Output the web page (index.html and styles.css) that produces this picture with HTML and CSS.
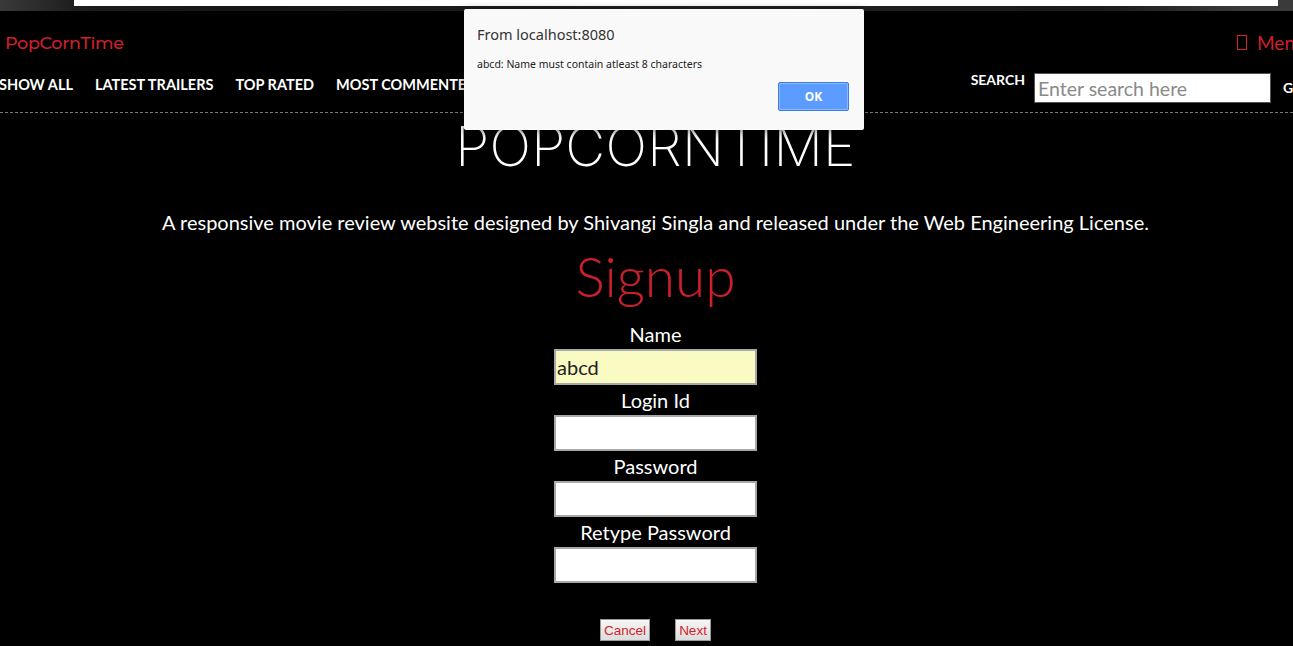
FILE: index.html
```html
<!DOCTYPE html>
<html>
<head>
<meta charset="utf-8">
<title>PopCornTime - Signup</title>
<link rel="stylesheet" href="styles.css">
</head>
<body>
<div class="topstrip"><div class="topbar"></div></div>
<header class="header">
  <div class="brand">PopCornTime</div>
  <div class="menu"><span class="menu-icon"></span>Menu</div>
</header>
<nav class="nav">
  <ul class="nav-list">
    <li>Show All</li>
    <li>Latest Trailers</li>
    <li>Top Rated</li>
    <li>Most Commented</li>
  </ul>
  <div class="search">
    <span class="search-label">Search</span>
    <input class="search-input" type="text" placeholder="Enter search here">
    <span class="search-go">GO</span>
  </div>
</nav>
<main class="main">
  <h1 class="title">POPCORNTIME</h1>
  <p class="subtitle">A responsive movie review website designed by Shivangi Singla and released under the Web Engineering License.</p>
  <h2 class="signup">Signup</h2>
  <form class="form">
    <label class="label">Name</label>
    <input class="field field-filled" type="text" value="abcd">
    <label class="label">Login Id</label>
    <input class="field" type="text">
    <label class="label">Password</label>
    <input class="field" type="password">
    <label class="label">Retype Password</label>
    <input class="field" type="password">
    <div class="buttons">
      <button type="button" class="btn">Cancel</button>
      <button type="button" class="btn">Next</button>
    </div>
  </form>
</main>
<div class="dialog">
  <div class="dialog-title">From localhost:8080</div>
  <div class="dialog-msg">abcd: Name must contain atleast 8 characters</div>
  <div class="dialog-actions"><button type="button" class="dialog-ok">OK</button></div>
</div>
</body>
</html>
```
FILE: styles.css
```css
html, body {
  margin: 0;
  padding: 0;
  background: #000;
  overflow: hidden;
  font-family: "Lato", "Noto Sans", sans-serif;
  color: #fff;
}
.topstrip {
  height: 11px;
  background: linear-gradient(90deg, #3a3a3a 0px, #1c1c1c 80px, #151515 260px, #222 700px, #1a1a1a 1100px, #3a3a3a 1240px);
  padding-left: 74px;
  padding-right: 15px;
}
.topbar {
  height: 6px;
  background: #fff;
}
.header {
  display: flex;
  justify-content: space-between;
  align-items: center;
  height: 62px;
  margin-right: -40px;
}
.brand {
  color: #d11f2c;
  font-family: "Montserrat", "Inter", sans-serif;
  font-weight: 500;
  font-size: 17.5px;
  padding-left: 5px;
  letter-spacing: -0.3px;
}
.menu {
  color: #d11f2c;
  font-size: 19px;
  display: flex;
  align-items: center;
  gap: 10px;
  width: 96px;
}
.menu-icon {
  display: inline-block;
  width: 8px;
  height: 13px;
  border: 1px solid #d11f2c;
}
.nav {
  display: flex;
  justify-content: space-between;
  align-items: flex-start;
  height: 39px;
  border-bottom: 1px dashed #777;
  margin-right: -30px;
}
.nav-list {
  display: flex;
  gap: 22px;
  list-style: none;
  margin: 2px 0 0 -1px;
  padding: 0;
}
.nav-list li {
  text-transform: uppercase;
  font-weight: 700;
  font-size: 14.5px;
  line-height: 20px;
  letter-spacing: 0;
}
.search {
  display: flex;
  align-items: flex-start;
  gap: 9px;
}
.search-label {
  text-transform: uppercase;
  font-weight: 700;
  font-size: 14px;
  line-height: 14px;
}
.search-input {
  width: 237px;
  height: 30px;
  box-sizing: border-box;
  border: 1px solid #555;
  padding: 0 3px;
  font-family: "Lato", sans-serif;
  font-size: 19.5px;
  color: #333;
  margin: 0 3px 0 0;
}
.search-input::placeholder {
  color: #8a8a8a;
}
.search-go {
  font-weight: 700;
  font-size: 14px;
  line-height: 14px;
  margin-top: 8px;
  width: 40px;
}
.main {
  display: flex;
  flex-direction: column;
  align-items: center;
  margin-right: -18px;
}
.title {
  margin: 3px 0 0;
  font-weight: 200;
  font-family: "Inter", "Lato", sans-serif;
  font-size: 55px;
  line-height: 60px;
  letter-spacing: 0.3px;
}
.subtitle {
  margin: 34px 0 0;
  font-size: 20px;
  line-height: 24px;
}
.signup {
  margin: 11px 0 0;
  color: #cb1f2d;
  font-weight: 300;
  font-size: 55px;
  line-height: 62px;
}
.form {
  display: flex;
  flex-direction: column;
  align-items: center;
  margin-top: 12px;
}
.label {
  font-size: 20px;
  line-height: 30px;
}
.field {
  width: 203px;
  height: 36px;
  box-sizing: border-box;
  border: 2px solid #a8a8a8;
  background: #fff;
  font-family: "Lato", sans-serif;
  font-size: 20px;
  padding: 0 1px;
  color: #222;
}
.field-filled {
  background: #fafbc2;
}
.buttons {
  display: flex;
  gap: 25px;
  margin-top: 36px;
}
.btn {
  font-family: "Liberation Sans", Arial, sans-serif;
  font-size: 13.5px;
  color: #d11f2c;
  background: linear-gradient(#f6f6f6, #dcdcdc);
  border: 1px solid #9a9a9a;
  padding: 2px 3px;
  height: 22px;
}
.dialog {
  position: absolute;
  left: 464px;
  top: 9px;
  width: 400px;
  height: 121px;
  box-sizing: border-box;
  background: #f9f9f9;
  border-radius: 2px;
  box-shadow: 0 2px 10px rgba(0,0,0,0.5);
  padding: 16px 13px 0;
  font-family: "Noto Sans", sans-serif;
  color: #333;
}
.dialog-title {
  font-size: 14.5px;
  line-height: 18px;
}
.dialog-msg {
  font-size: 10.5px;
  margin-top: 14px;
  color: #222;
}
.dialog-actions {
  display: flex;
  justify-content: flex-end;
  margin-top: 11px;
  padding-right: 2px;
}
.dialog-ok {
  width: 71px;
  height: 29px;
  background: #5c9bff;
  border: 1px solid #3e7ce6;
  border-radius: 2px;
  color: #fff;
  font-weight: 700;
  font-size: 12px;
  font-family: "Noto Sans", sans-serif;
  box-shadow: inset 0 0 0 1px #8ab8ff;
}
```
